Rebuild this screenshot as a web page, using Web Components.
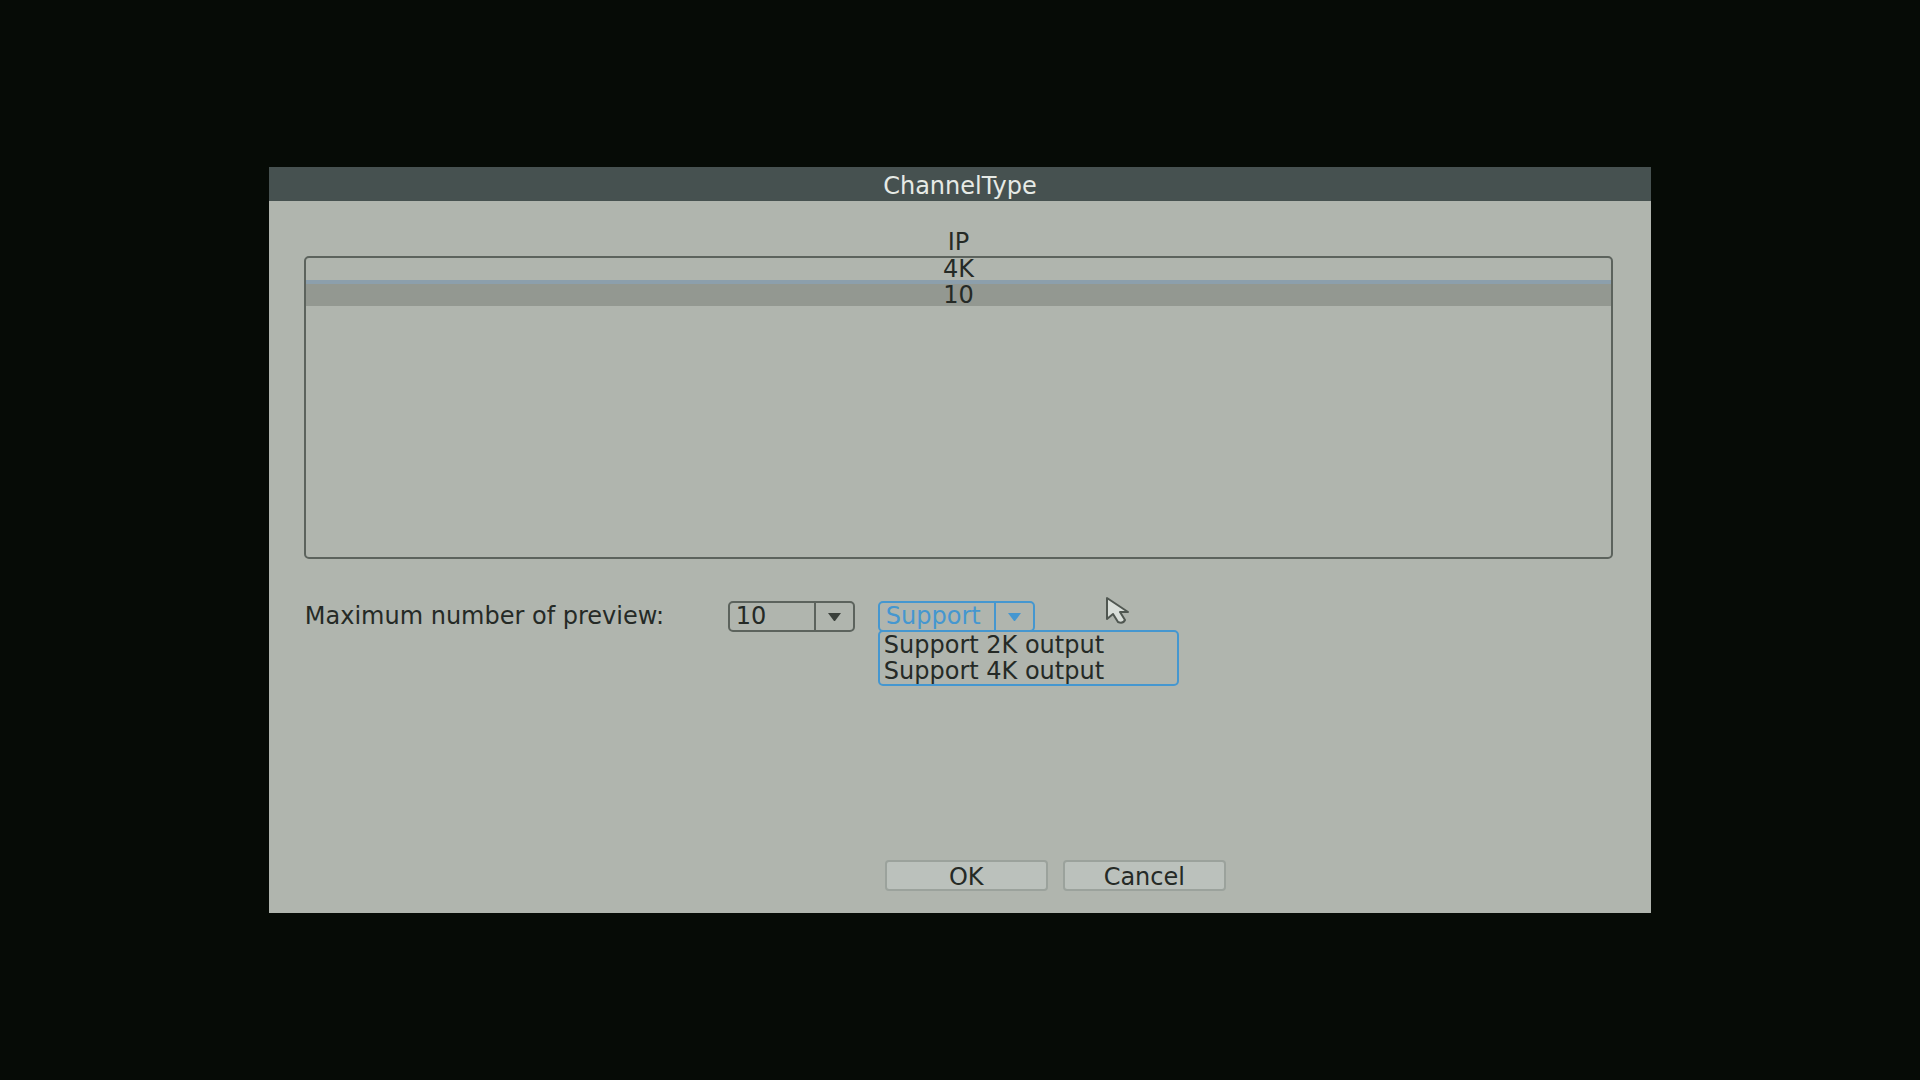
<!DOCTYPE html>
<html lang="en">
<head>
<meta charset="utf-8">
<title>ChannelType</title>
<style>
  body {
    --ink: #252a26;
    --panel: #b0b5ae;
    --line: #5c635d;
    --accent: #4597d0;
    margin: 0;
    min-height: 100vh;
    display: flex;
    align-items: center;
    justify-content: center;
    background: #060b06;
    color: var(--ink);
    font: 24px/26px "DejaVu Sans", sans-serif;
  }
</style>
</head>
<body>

<dvr-dialog heading="ChannelType">
  <channel-table></channel-table>
  <preview-form></preview-form>
  <dvr-button slot="actions">OK</dvr-button>
  <dvr-button slot="actions">Cancel</dvr-button>
  <mouse-pointer slot="overlay"></mouse-pointer>
</dvr-dialog>

<script>
/** Attach an open shadow root and fill it from a markup string. */
function render(host, html) {
  const template = document.createElement('template');
  template.innerHTML = html;
  host.attachShadow({ mode: 'open' }).appendChild(template.content.cloneNode(true));
}

/**
 * <dvr-dialog heading="...">
 * Slots: default (body), actions (bottom buttons), overlay (pointer).
 */
class DvrDialog extends HTMLElement {
  constructor() {
    super();
    render(this, `
<style>
  :host {
    position: relative;
    display: flex;
    flex-direction: column;
    box-sizing: border-box;
    width: 72%;
    min-height: 69vh;
    background: var(--panel);
  }

  header {
    padding-top: 4px;
    background: #465150;
    text-align: center;
  }

  h1 {
    margin: 0;
    font: inherit;
    line-height: 30px;
    color: #e6eae6;
  }

  main {
    flex: 1;
    padding: 27px 38px 0 35px;
  }

  footer {
    display: flex;
    gap: 15px;
    padding: 0 38px 22px 616px;
  }
</style>
<header><h1></h1></header>
<main><slot></slot></main>
<footer><slot name="actions"></slot></footer>
<slot name="overlay"></slot>
`);
  }

  connectedCallback() {
    this.shadowRoot.querySelector('h1').textContent = this.getAttribute('heading');
  }
}

/** <channel-table> - IP channel modes, the current one highlighted. */
class ChannelTable extends HTMLElement {
  constructor() {
    super();
    render(this, `
<style>
  :host { display: block; }

  table, thead, tbody {
    display: flex;
    flex-direction: column;
  }

  tr { display: flex; }

  th, td {
    flex: 1;
    padding: 0;
    font-weight: 400;
    text-align: center;
  }

  th { line-height: 28px; }

  tbody {
    box-sizing: border-box;
    min-height: 28vh;
    border: 2px solid var(--line);
    border-radius: 5px;
  }

  td { line-height: 22px; }

  .selected td {
    border-top: 4px solid #8c9fac;
    background: #939891;
  }
</style>
<table>
  <thead><tr><th scope="col">IP</th></tr></thead>
  <tbody>
    <tr><td>4K</td></tr>
    <tr class="selected"><td>10</td></tr>
  </tbody>
</table>
`);
  }
}

/** <preview-form> - preview count and output mode, the latter dropped down. */
class PreviewForm extends HTMLElement {
  constructor() {
    super();
    render(this, `
<style>
  :host {
    display: grid;
    grid-template-columns: 424px 127px 157px;
    align-items: center;
    margin-top: 42px;
  }

  label { padding-left: 1px; }

  .combo {
    --tone: var(--line);
    position: relative;
    display: flex;
    box-sizing: border-box;
    height: 31px;
    border: 2px solid var(--tone);
    border-radius: 5px;
  }

  .output {
    --tone: var(--accent);
    margin-left: 23px;
    width: 157px;
  }

  select {
    appearance: none;
    flex: 1;
    min-width: 0;
    padding: 0 0 0 6px;
    border: 0;
    outline: 0;
    background: none;
    color: inherit;
    font: inherit;
  }

  .output select { color: var(--accent); }

  .arrow {
    flex: none;
    width: 37px;
    border-left: 2px solid var(--tone);
    fill: var(--tone);
    pointer-events: none;
  }

  .count .arrow { fill: #3a403b; }

  ul {
    position: absolute;
    top: 100%;
    left: -2px;
    box-sizing: border-box;
    width: 301px;
    margin: 0;
    padding: 0 0 0 4px;
    border: 2px solid var(--accent);
    border-radius: 5px;
    background: var(--panel);
    list-style: none;
    white-space: nowrap;
  }
</style>
<label for="count">Maximum number of preview:</label>
<div class="combo count">
  <select id="count"><option>10</option></select>
  <svg class="arrow" viewBox="0 0 37 27" aria-hidden="true"><path d="M12 10h13l-6 8h-1z"/></svg>
</div>
<div class="combo output">
  <select aria-label="Output mode"><option>Support</option></select>
  <svg class="arrow" viewBox="0 0 37 27" aria-hidden="true"><path d="M12 10h13l-6 8h-1z"/></svg>
  <ul role="listbox" aria-label="Output modes">
    <li role="option">Support 2K output</li>
    <li role="option">Support 4K output</li>
  </ul>
</div>
`);
  }
}

/** <dvr-button> - raised push button. */
class DvrButton extends HTMLElement {
  constructor() {
    super();
    render(this, `
<style>
  :host { display: block; }

  button {
    width: 163px;
    height: 31px;
    padding: 2px 0 0;
    border: 2px solid #9ba29c;
    border-radius: 4px;
    background: #bbc1bc;
    color: inherit;
    font: inherit;
  }
</style>
<button type="button"><slot></slot></button>
`);
  }
}

/** <mouse-pointer> - pointer drawn over the dialog. */
class MousePointer extends HTMLElement {
  constructor() {
    super();
    render(this, `
<style>
  :host {
    position: absolute;
    top: 429px;
    left: 836px;
    pointer-events: none;
  }

  svg { display: block; }
</style>
<svg width="26" height="29" viewBox="0 0 26 29" aria-hidden="true">
  <path d="M2 2v21l6-5 5 8q5 2 7-2l-5-8h8z" fill="#d9ded9" stroke="#505751" stroke-width="2" stroke-linejoin="round"/>
</svg>
`);
  }
}

customElements.define('dvr-dialog', DvrDialog);
customElements.define('channel-table', ChannelTable);
customElements.define('preview-form', PreviewForm);
customElements.define('dvr-button', DvrButton);
customElements.define('mouse-pointer', MousePointer);
</script>
</body>
</html>
